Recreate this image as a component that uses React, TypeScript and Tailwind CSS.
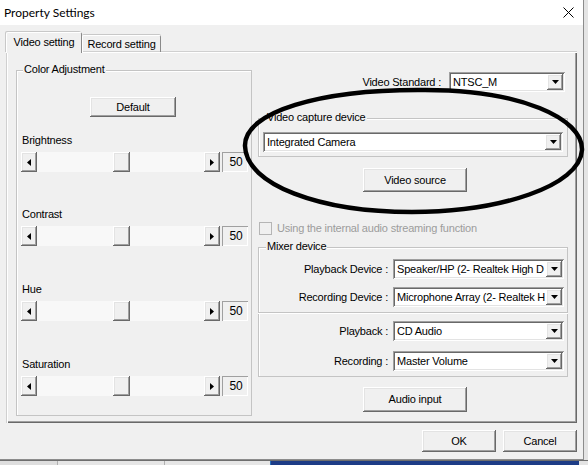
import React from "react";

const raised =
  "bg-[#f0f0f0] shadow-[inset_-1px_-1px_0_#696969,inset_1px_1px_0_#ffffff,inset_-2px_-2px_0_#a0a0a0,inset_2px_2px_0_#e3e3e3]";
const sunken =
  "shadow-[inset_1px_1px_0_#a0a0a0,inset_-1px_-1px_0_#ffffff,inset_2px_2px_0_#696969,inset_-2px_-2px_0_#e3e3e3]";
const etched = "shadow-[inset_0_0_0_1px_#c4c4c4,inset_1px_1px_0_1px_#ffffff]";

function DownArrow() {
  return (
    <svg width="7" height="4" viewBox="0 0 7 4">
      <path d="M0 0h7L3.5 4z" fill="#000" />
    </svg>
  );
}

function Combo({ text, width }: { text: string; width: string }) {
  return (
    <div className={`flex h-[20px] shrink-0 bg-white p-[2px] ${sunken} ${width}`}>
      <span className="flex-1 overflow-hidden whitespace-nowrap pl-[2px] leading-[16px]">
        {text}
      </span>
      <span className={`flex w-[16px] items-center justify-center ${raised}`}>
        <DownArrow />
      </span>
    </div>
  );
}

function Button({ label, className }: { label: string; className: string }) {
  return (
    <div className={`flex items-center justify-center ${raised} ${className}`}>
      {label}
    </div>
  );
}

function Slider({ label, className }: { label: string; className: string }) {
  return (
    <div className={className}>
      {/*LABEL*/}
      <div className="h-[13px] pl-[1px] leading-[13px]">{label}</div>
      {/*SCROLLBAR + VALUE*/}
      <div className="mt-[5px] flex h-[20px]">
        <div className="flex w-[199px]">
          <span className={`flex w-[16px] items-center justify-center ${raised}`}>
            <svg width="4" height="7" viewBox="0 0 4 7">
              <path d="M4 0v7L0 3.5z" fill="#000" />
            </svg>
          </span>
          <div className="flex flex-1 bg-[#f8f8f8] pl-[76px]">
            <span className={`w-[17px] ${raised}`} />
          </div>
          <span className={`flex w-[16px] items-center justify-center ${raised}`}>
            <svg width="4" height="7" viewBox="0 0 4 7">
              <path d="M0 0v7L4 3.5z" fill="#000" />
            </svg>
          </span>
        </div>
        <div className="ml-[2px] flex w-[26px] items-center justify-center pl-[2px] text-[12px] shadow-[inset_1px_1px_0_#a0a0a0,inset_-1px_-1px_0_#ffffff]">
          50
        </div>
      </div>
    </div>
  );
}

function MixerRow({ label, value, className }: { label: string; value: string; className: string }) {
  return (
    <div className={`flex items-center justify-end pr-[4px] ${className}`}>
      <span className="mr-[5px] whitespace-nowrap">{label}</span>
      <Combo text={value} width="w-[171px]" />
    </div>
  );
}

export default function App() {
  return (
    <div className="relative h-[465px] w-[588px] overflow-hidden bg-[#e4e4e4] font-['Liberation_Sans',Arial,sans-serif] text-[11px] tracking-[-0.2px] text-black">
      {/*DIALOG*/}
      <div className="h-[460px] w-[584px] border-b border-r border-[#8c8c8c] bg-[#f0f0f0]">
        {/*TITLE BAR*/}
        <div className="flex h-[25px] items-center justify-between bg-white pl-[4px] pr-[9px]">
          <span className="font-['Lato',sans-serif] text-[12px] tracking-normal">Property Settings</span>
          <svg width="11" height="11" viewBox="0 0 11 11">
            <path d="M0.5 0.5L10.5 10.5M10.5 0.5L0.5 10.5" stroke="#000" strokeWidth="1" />
          </svg>
        </div>

        <div className="pl-[7px] pt-[7px]">
          {/*TABS*/}
          <div className="flex h-[20px] items-end">
            <div className="relative z-10 -mb-[1px] -ml-[1px] flex h-[21px] w-[76px] items-center justify-center rounded-t-[2px] border-l border-r border-t border-l-white border-r-[#8a8a8a] border-t-white bg-[#f0f0f0] pb-[2px] shadow-[-1px_-1px_0_#c8c8c8]">
              Video setting
            </div>
            <div className="flex h-[17px] w-[79px] items-center justify-center rounded-t-[2px] border-l border-r border-t border-l-white border-r-[#8a8a8a] border-t-white pt-[1px] shadow-[0_-1px_0_#c8c8c8]">
              Record setting
            </div>
          </div>

          {/*TAB PANEL*/}
          <div className="flex h-[371px] w-[570px] gap-[6px] pl-[9px] pt-[18px] shadow-[inset_1px_1px_0_#ffffff,inset_-1px_-1px_0_#696969,inset_-2px_-2px_0_#a0a0a0,0_-1px_0_#d0d0d0,-1px_0_0_#d0d0d0]">
            {/*COLOR ADJUSTMENT*/}
            <div className={`relative h-[346px] w-[236px] pl-[5px] pt-[27px] ${etched}`}>
              <span className="absolute -top-[7px] left-[7px] bg-[#f0f0f0] px-[1px] leading-[13px]">
                Color Adjustment
              </span>
              <Button label="Default" className="ml-[69px] h-[20px] w-[86px]" />
              <Slider label="Brightness" className="mt-[17px]" />
              <Slider label="Contrast" className="mt-[36px]" />
              <Slider label="Hue" className="mt-[37px]" />
              <Slider label="Saturation" className="mt-[37px]" />
            </div>

            {/*RIGHT COLUMN*/}
            <div className="flex w-[310px] flex-col">
              <div className="mt-[2px] flex h-[20px] items-center justify-end pr-[3px]">
                <span className="mr-[8px]">Video Standard :</span>
                <Combo text="NTSC_M" width="w-[116px]" />
              </div>

              {/*VIDEO CAPTURE DEVICE*/}
              <div className={`relative mt-[26px] h-[39px] px-[5px] pt-[14px] ${etched}`}>
                <span className="absolute -top-[7px] left-[8px] bg-[#f0f0f0] px-[1px] leading-[13px]">
                  Video capture device
                </span>
                <Combo text="Integrated Camera" width="w-[300px]" />
              </div>
              <Button label="Video source" className="ml-[105px] mt-[11px] h-[24px] w-[104px]" />

              {/*AUDIO STREAMING CHECKBOX*/}
              <div className="mt-[30px] flex h-[13px] items-center pl-[1px] text-[#9c9c9c]">
                <span className="h-[13px] w-[13px] border border-[#b5b5b5] bg-[#f0f0f0]" />
                <span className="ml-[5px] whitespace-nowrap">Using the internal audio streaming function</span>
              </div>

              {/*MIXER DEVICE*/}
              <div className={`relative mt-[12px] h-[130px] pt-[12px] ${etched}`}>
                <span className="absolute -top-[7px] left-[8px] bg-[#f0f0f0] px-[1px] leading-[13px]">
                  Mixer device
                </span>
                <MixerRow label="Playback Device :" value="Speaker/HP (2- Realtek High D" className="" />
                <MixerRow label="Recording Device :" value="Microphone Array (2- Realtek H" className="mt-[8px]" />
                <div className="mt-[5px] h-[2px] border-t border-b border-t-[#c4c4c4] border-b-white" />
                <MixerRow label="Playback :" value="CD Audio" className="mt-[7px]" />
                <MixerRow label="Recording :" value="Master Volume" className="mt-[10px]" />
              </div>
              <Button label="Audio input" className="ml-[105px] mt-[10px] h-[25px] w-[104px]" />
            </div>
          </div>

          {/*FOOTER BUTTONS*/}
          <div className="mt-[7px] flex w-[570px] justify-end gap-[7px]">
            <Button label="OK" className="h-[22px] w-[74px]" />
            <Button label="Cancel" className="h-[22px] w-[74px]" />
          </div>
        </div>
      </div>

      {/*BACKGROUND WINDOW STRIP*/}
      <div className="flex h-[5px] border-t border-[#6e6e6e]">
        <div className="w-[58px] border-r border-[#b0b0b0] bg-[#dedede]" />
        <div className="w-[107px] border-r border-[#b0b0b0] bg-[#e6e6e6]" />
        <div className="w-[106px] border-r border-[#2a6fb8] bg-[#e6e6e6]" />
        <div className="w-[308px] bg-[#1d3c86]" />
      </div>

      {/*HAND-DRAWN MARKER ELLIPSE*/}
      <svg className="pointer-events-none absolute left-0 top-0" width="588" height="465" viewBox="0 0 588 465">
        <path
          d="M425 90 C 520 90, 583 118, 582 150 C 580 186, 500 212, 412 212 C 320 212, 246 185, 245 146 C 244 112, 320 89, 425 90 Z"
          fill="none"
          stroke="#000"
          strokeWidth="4.5"
        />
      </svg>
    </div>
  );
}
